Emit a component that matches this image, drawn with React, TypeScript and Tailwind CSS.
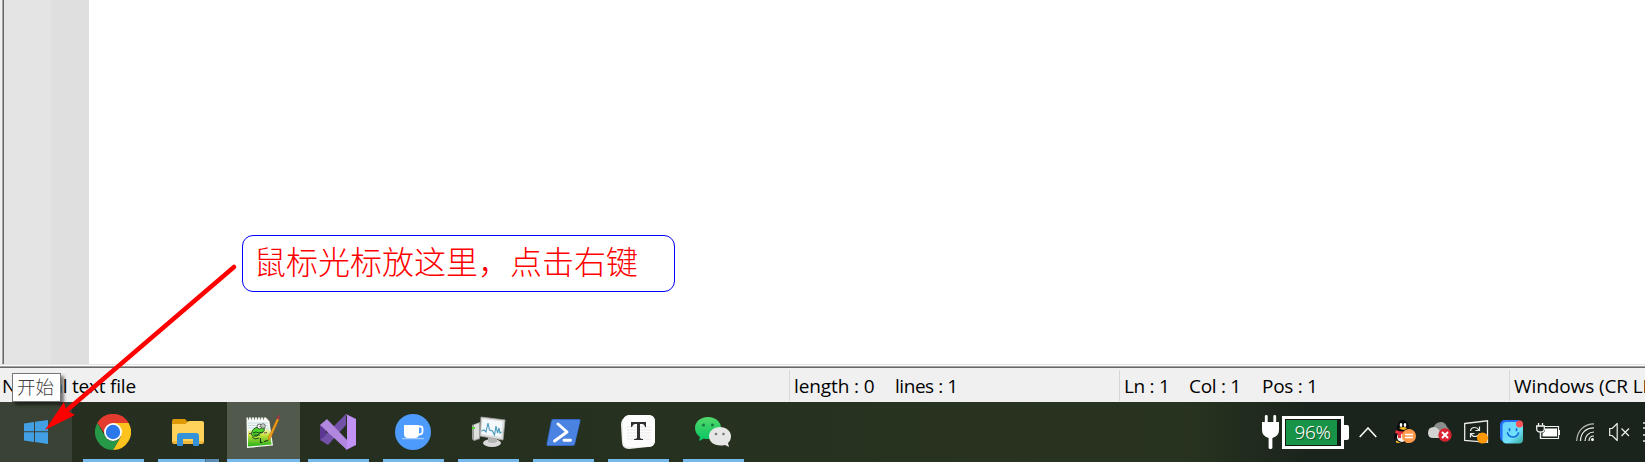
import type { ReactNode } from "react";

function StartIcon() {
  return (
    <svg width="24" height="24" viewBox="0 0 24 24" fill="#439fe4">
      <path d="M0 3.4 10 2v9.3H0zM11 1.8 24 0v11.3H11zM0 12.3h10v9.6L0 20.6zM11 12.3h13V24l-13-1.9z" />
    </svg>
  );
}

function ChromeIcon() {
  return (
    <svg width="36" height="36" viewBox="0 0 36 36">
      <path d="M18 18 2.4 9A18 18 0 0 1 33.6 9z" fill="#e33b2e" />
      <path d="M18 9h15.6A18 18 0 0 1 18 36l7.8-13.5z" fill="#fcc31e" />
      <path d="M2.4 9 10.2 22.5A9 9 0 0 0 25.8 22.5L18 36A18 18 0 0 1 2.4 9z" fill="#279847" />
      <path d="M2.4 9A18 18 0 0 1 33.6 9H18a9 9 0 0 0-8.5 10.5z" fill="#e33b2e" />
      <circle cx="18" cy="18" r="9" fill="#fff" />
      <circle cx="18" cy="18" r="7.2" fill="#2b78ea" />
    </svg>
  );
}

function ExplorerIcon() {
  return (
    <svg className="mt-[1px]" width="32" height="28" viewBox="0 0 32 28">
      <path d="M0 2q0-2 2-2h11l3 3h14q2 0 2 2v5H0z" fill="#dd9a04" />
      <path d="M0 6q0-1 1-1h12q1 0 2-1.500t2-1.500h13q2 0 2 2v18q0 2-2 2H2q-2 0-2-2z" fill="#ffd35a" />
      <path d="M0 22h32v1q0 2-2 2H2q-2 0-2-2z" fill="#efb83c" />
      <path d="M8 14h16q3 0 3 3v9q0 1-1 1h-4q-1 0-1-1v-6H11v6q0 1-1 1H6q-1 0-1-1v-9q0-3 3-3z" fill="#3592d8" />
    </svg>
  );
}

function NotepadIcon() {
  return (
    <svg width="34" height="34" viewBox="0 0 34 34">
      <defs>
        <linearGradient id="meadow" x1="0" y1="0" x2="0" y2="1">
          <stop stopColor="#f1f5c0" /><stop offset=".35" stopColor="#c5e23c" /><stop offset="1" stopColor="#23b01a" />
        </linearGradient>
      </defs>
      <path d="M.5 2.500H20l3.500 4 3.500 24-26 2.500z" fill="#f6f8f3" />
      <path d="M2 8h20M2 10.500h20M2 13h21" stroke="#b7d3e0" strokeWidth=".8" />
      <path d="M2 15.500 23.500 14l2 15.500L2 31.500z" fill="url(#meadow)" />
      <path d="M2.500 2v2.500M5.500 2v2.500M8.500 2v2.500M11.500 2v2.500M14.500 2v2.500M17.500 2v2.500" stroke="#5b625a" strokeWidth=".9" />
      <path d="M6 17c1-5 8-6 12-4 1 3-1 5-4 5l-3 3c-4 1-7-1-5-4z" fill="#4fd32e" stroke="#164d14" strokeWidth=".9" />
      <circle cx="13.500" cy="11.500" r="2.400" fill="#f8fbf6" stroke="#222" strokeWidth=".7" />
      <circle cx="17" cy="11" r="2.200" fill="#f8fbf6" stroke="#222" strokeWidth=".7" />
      <path d="M14 11v1.300M17 10.500v1.300M7 18l3-1 3 1 4-1M6 22l3 2 4-1M8 20h6" fill="none" stroke="#1b3c1b" strokeWidth=".9" />
      <path d="M3 18.500h3M18 18l3-.5" stroke="#7d3653" strokeWidth=".9" />
      <path d="m31 3.500 2 1-8.500 19-2.500 2 .3-3z" fill="#f2a318" stroke="#a65d12" strokeWidth=".5" />
      <path d="m30.700 3.500 1.300-3q2-.7 2 1L32.700 4.500z" fill="#a63745" />
      <path d="M14.500 23v4.500h2M18 26.500l4-1" fill="none" stroke="#1b351b" strokeWidth="1.100" />
    </svg>
  );
}

function VisualStudioIcon() {
  return (
    <svg width="36" height="36" viewBox="0 0 36 36">
      <path d="M0 11 6 16v5l-6 5z" fill="#52308a" />
      <path d="M0 26 26 0v11L8 31z" fill="#7351a9" />
      <path d="M0 11v15l6-5v-5z" fill="#5c3690" />
      <path d="m0 11 7-6 20 21v10z" fill="#b187df" />
      <path d="m26 0 10 5v26l-10 5q1-1 1-3V3q0-2-1-3z" fill="#c292f7" />
    </svg>
  );
}

function CoffeeIcon() {
  return (
    <svg width="36" height="36" viewBox="0 0 36 36">
      <circle cx="18" cy="18" r="18" fill="#4c9bfd" />
      <path d="M9 11h15v9q0 4-4 4h-7q-4 0-4-4z" fill="#fff" />
      <path d="M23 12.500h2.500q2 0 2 2v3q0 3-4 3" fill="none" stroke="#fff" strokeWidth="1.800" />
      <path d="M7 24.700h22" stroke="#b9d8ff" strokeWidth="1" />
    </svg>
  );
}

function MonitorIcon() {
  return (
    <svg width="35" height="32" viewBox="0 0 35 32">
      <path d="m1 9 8-3v17l-6 2-2-2z" fill="#9b9d9c" />
      <path d="m3 9 5-2v15l-5 2z" fill="#dedfdd" />
      <path d="M1 11h3v2H1z" fill="#52d62d" />
      <ellipse cx="21" cy="27" rx="9" ry="4" fill="#d9dad9" />
      <path d="M17 20h9v6q-4 2-9 0z" fill="#b4b6b5" />
      <path d="m10 1 24 3-2 20-23-4z" fill="#dcdddc" stroke="#a4a5a4" strokeWidth=".8" />
      <path d="m11.500 3 20 2.500-1.500 15.500L10.500 18z" fill="#f3f8fa" />
      <path d="m10.500 15 2.500-1 2 2 2-9 1.500 7 3 1 2 4 1.500-9 1.500 7 1.500-5 1 5 1.500-1" fill="none" stroke="#4999bd" strokeWidth="1.100" />
    </svg>
  );
}

function PowerShellIcon() {
  return (
    <svg width="35" height="27" viewBox="0 0 35 27">
      <path d="M7 0h26q2 0 1.500 2L29 25q-.5 2-2 2H2q-2 0-1.500-2L5 2q.5-2 2-2z" fill="#3568c5" />
      <path d="M7 1h26q1 0 .800 1l-5.300 23q-.4 1-1.500 1H2q-1 0-.7-1L6 2q.3-1 1-1z" fill="#4b83e3" />
      <path d="m12 5 9 8L8.500 22M18 21.300h6.500" fill="none" stroke="#fff" strokeWidth="2.900" strokeLinecap="round" strokeLinejoin="round" />
    </svg>
  );
}

function TyporaIcon() {
  return (
    <svg width="34" height="34" viewBox="0 0 34 34">
      <path d="M3 3 8 0h19q7 0 7 7v18q0 7-7 7l-19 2q-7 0-7-7L0 10q0-5 3-7z" fill="#eeeeed" />
      <rect x="2" y="0" width="32" height="32" rx="6" fill="#fdfdfd" />
      <path d="M6 12h24M6 15h24M6 18h24M6 21h24M6 24h24" stroke="#dedede" strokeWidth=".7" />
      <path d="M10 7h15v5h-1q-.5-3-3-3h-2v13q0 2 3 2v1h-9v-1q3 0 3-2V9h-2q-2 0-3 3h-1z" fill="#303033" />
    </svg>
  );
}

function WeChatIcon() {
  return (
    <svg width="36" height="30" viewBox="0 0 36 30">
      <defs>
        <linearGradient id="chat" x1="0" y1="0" x2="0" y2="1">
          <stop stopColor="#53d769" /><stop offset="1" stopColor="#04c663" />
        </linearGradient>
      </defs>
      <path d="M13 0c8 0 13 5 13 11s-5 11-13 11c-2 0-3 0-4-.5L4 24l1-4C2 18 0 15 0 11 0 5 5 0 13 0z" fill="url(#chat)" />
      <circle cx="8.500" cy="8" r="1.500" fill="#167a42" /><circle cx="17.500" cy="8" r="1.500" fill="#167a42" />
      <path d="M25 10c6 0 11 4 11 9 0 3-1 5-3 7l1 4-4-2c-9 2-16-2-16-9 0-5 5-9 11-9z" fill="#e5e6e5" />
      <circle cx="21" cy="17" r="1.300" fill="#777a78" /><circle cx="28.500" cy="17" r="1.300" fill="#777a78" />
    </svg>
  );
}

function TaskItem({ children, active, stacked }: { children: ReactNode; active?: boolean; stacked?: boolean }) {
  return (
    <div className={active ? "flex h-full w-[73px] flex-col bg-[#50594b]" : "flex h-full w-[73px] flex-col px-[6px]"}>
      <div className="flex h-[57px] items-center justify-center pt-[3px] pr-px">{children}</div>
      <div className="flex h-[3px] bg-[#76b9ed]">
        {stacked && <span className="ml-auto w-[14px] border-l border-[#45708e] bg-[#5b8db3]" />}
      </div>
    </div>
  );
}

function PlugIcon() {
  return (
    <svg className="ml-[2px]" width="17" height="34" viewBox="0 0 18 34" preserveAspectRatio="none" fill="#fff">
      <path d="M3 1q0-1 1.500-1T6 1v6h6V1q0-1 1.500-1T15 1v6h3v8q0 6-7 8v10q0 1-2 1t-2-1V23q-7-2-7-8V7h3z" />
    </svg>
  );
}

function QQIcon() {
  return (
    <svg width="23" height="24" viewBox="0 0 23 24">
      <path d="M3 21q-1 2 3 2h10v-3H5z" fill="#f3b420" />
      <path d="M4 9C4-3 16-3 16 9l3 7v4l-2-2q-1 5-7 5t-7-5l-2 2v-4z" fill="#080b0c" />
      <ellipse cx="9" cy="17" rx="5" ry="5" fill="#f3f3ef" />
      <ellipse cx="8" cy="5" rx="1.300" ry="2" fill="#fff" /><ellipse cx="12" cy="5" rx="1.300" ry="2" fill="#fff" />
      <path d="M6 8q4-2 8 0-3 4-8 0z" fill="#f5b51e" />
      <path d="M3 10q7 3 13 0v3q-4 2-8 1v4H5v-4l-3-1z" fill="#e5313c" />
      <circle cx="16" cy="16" r="7" fill="#ff9a4b" />
      <path d="M12 14.500h8M12 17.500h8" stroke="#fff" strokeWidth="1.300" />
    </svg>
  );
}

function CloudIcon() {
  return (
    <svg width="24" height="20" viewBox="0 0 24 20">
      <path d="M5 7q2-7 8-7 4 0 6 5 2 1 2 4v3H8z" fill="#8c8e8c" />
      <path d="M0 11q0-6 6-6 3 0 5 3l6 3-4 5H5q-5 0-5-5z" fill="#d2d3d1" />
      <circle cx="17" cy="13" r="6.700" fill="#d92332" />
      <path d="m14 10 6 6m0-6-6 6" stroke="#fff" strokeWidth="2" />
    </svg>
  );
}

function SyncIcon() {
  return (
    <svg width="25" height="24" viewBox="0 0 25 24">
      <path d="M.7 3.500 23.500.8v21.500L.7 20.500z" fill="none" stroke="#e8ebe8" strokeWidth="1.300" />
      <path d="M6.500 11q.5-3.500 4-3.500 3 0 4.500 2.500m.5-3.500v4h-4M15.500 13.500q-1 3-4.500 3-3 0-4-3m-.5 4v-4h4" fill="none" stroke="#e8ebe8" strokeWidth="1.200" />
      <circle cx="18.500" cy="18" r="5.500" fill="#ff9908" />
    </svg>
  );
}

function SmileIcon() {
  return (
    <svg width="24" height="24" viewBox="0 0 24 24">
      <defs>
        <linearGradient id="face" x1="0" y1="0" x2="1" y2="1">
          <stop stopColor="#67d0ff" /><stop offset=".6" stopColor="#70e2fb" /><stop offset="1" stopColor="#34a99d" />
        </linearGradient>
      </defs>
      <rect width="22" height="22" rx="5" fill="#216ef0" />
      <rect x="2.500" y="2" width="20.500" height="21.500" rx="4" fill="url(#face)" />
      <path d="M9.500 8.800v1.700m7-1.700v1.700M7.500 13q1.500 4 5.500 4t5.500-4" fill="none" stroke="#176ddd" strokeWidth="1.700" strokeLinecap="round" />
      <circle cx="19.500" cy="4" r="3.500" fill="#ff5054" />
    </svg>
  );
}

function BatteryIcon() {
  return (
    <svg className="-mt-px" width="24" height="17" viewBox="0 0 24 17" fill="none" stroke="#f1f3f1">
      <path d="M8 3.500h14.500v12H4.500V10M23.500 7v5" strokeWidth="1.200" />
      <path d="M9 5.500h12v8H6.500v-3L9 8z" fill="#fff" stroke="none" />
      <path d="M2.500 0v3m4-3v3M.7 3h7.600v3q0 3-3.800 3T.7 6zm3.800 6v6" strokeWidth="1.300" />
    </svg>
  );
}

function WifiIcon() {
  return (
    <svg width="19" height="19" viewBox="0 0 19 19" fill="none" stroke="#eef1ee" strokeWidth="1.200">
      <path d="M.7 18C1 8 8 .8 18 .8" stroke="#b4bab4" />
      <path d="M4.500 18C4.500 10 10 4.800 18 4.800M9 18c0-5 4-9 9-9M13 18c0-3 2-5 5-5" />
      <circle cx="16.500" cy="16.500" r="1.500" fill="#fff" stroke="none" />
    </svg>
  );
}

function SpeakerIcon() {
  return (
    <svg width="21" height="18" viewBox="0 0 21 18" fill="none" stroke="#eef1ee" strokeWidth="1.200">
      <path d="M.7 5.500h2.500l5-5v17l-5-5H.7zM12.500 5.500l7.500 7.500m0-7.500L12.500 13" />
    </svg>
  );
}

export default function App() {
  return (
    <main className="relative flex h-[462px] w-[1645px] flex-col overflow-hidden bg-white font-['Open_Sans','Noto_Sans_CJK_SC',sans-serif]">
      <section className="flex h-[364px]">
        <div className="w-[2px] bg-[#f0f0f0]" />
        <div className="w-[2px] border-l border-[#a0a0a0] bg-[#696969]" />
        <div className="w-[47px] bg-[#e4e4e4]" />
        <div className="w-[38px] bg-[#dfdfdf]" />
        <div className="flex-1 bg-white pt-[235px] pl-[153px]">
          <div className="h-[57px] w-[433px] rounded-[11px] border border-[#0000ff] pl-[11px] font-['Noto_Sans_CJK_SC',sans-serif] text-[32px] leading-[48px] font-light whitespace-nowrap text-[#ff0000]">
            鼠标光标放这里，点击右键
          </div>
        </div>
      </section>
      <div className="h-[4px] border-t border-[#e3e3e3] bg-white pt-px">
        <div className="h-[2px] border-t border-[#a0a0a0] bg-[#696969]" />
      </div>

      <footer className="flex h-[34px] bg-[#f0f0f0] pt-[2px] text-[19px] leading-[32px] whitespace-pre text-black">
        <div className="h-[31px] w-[790px] border-r border-[#d7d7d7] pl-[2px] tracking-[-0.2px]">Normal text file</div>
        <div className="flex h-[31px] w-[330px] gap-[22px] border-r border-[#d7d7d7] pl-[4px]">
          <span className="w-[79px] tracking-[-0.1px]">length : 0</span><span className="tracking-[-0.45px]">lines : 1</span>
        </div>
        <div className="flex h-[31px] w-[390px] border-r border-[#d7d7d7] pl-[4px] tracking-[-0.3px]">
          <span className="w-[65px]">Ln : 1</span><span className="w-[73px]">Col : 1</span><span>Pos : 1</span>
        </div>
        <div className="h-[31px] w-[135px] overflow-hidden pl-[4px] tracking-[-0.1px]">Windows (CR LF)</div>
      </footer>

      <nav className="flex h-[60px] bg-linear-to-r from-[#252e20] via-[#28331f] via-72% to-[#1a231c] to-80%">
        <div className="mr-[5px] flex h-full w-[72px] items-center justify-center bg-[#3a4235]"><StartIcon /></div>
        <div className="flex gap-[2px]">
          <TaskItem><ChromeIcon /></TaskItem>
          <TaskItem stacked><ExplorerIcon /></TaskItem>
          <TaskItem active><NotepadIcon /></TaskItem>
          <TaskItem><VisualStudioIcon /></TaskItem>
          <TaskItem><CoffeeIcon /></TaskItem>
          <TaskItem><MonitorIcon /></TaskItem>
          <TaskItem><PowerShellIcon /></TaskItem>
          <TaskItem><TyporaIcon /></TaskItem>
          <TaskItem><WeChatIcon /></TaskItem>
        </div>
        <div className="ml-auto flex w-[385px] shrink-0 items-center">
          <PlugIcon />
          <div className="ml-[3px] flex h-[33px] w-[62px] border-[3px] border-white bg-[#111914] p-px">
            <div className="flex w-[51px] items-center justify-center bg-[#179447] pl-[2px] font-['Noto_Sans',sans-serif] text-[19px] font-light tracking-[-0.4px] text-white [text-shadow:1px_1px_1px_#174c2b]">96%</div>
          </div>
          <div className="h-[15px] w-[5px] rounded-r-[2px] bg-white" />
          <svg className="ml-[10px]" width="18" height="11" viewBox="0 0 18 11" fill="none" stroke="#fff" strokeWidth="1.500"><path d="m.7 10 8.300-9 8.300 9" /></svg>
          <div className="ml-[16px]"><QQIcon /></div>
          <div className="ml-[12px]"><CloudIcon /></div>
          <div className="ml-[12px]"><SyncIcon /></div>
          <div className="ml-[11px]"><SmileIcon /></div>
          <div className="ml-[12px]"><BatteryIcon /></div>
          <div className="ml-[16px]"><WifiIcon /></div>
          <div className="ml-[14px]"><SpeakerIcon /></div>
          <svg className="ml-auto" width="2" height="20" viewBox="0 0 2 20"><path d="M0 1h2M0 6h2M0 13h2M0 19h2" stroke="#e4e8e4" strokeWidth="1.500" /></svg>
        </div>
      </nav>

      <div className="absolute top-[373px] left-[12px] flex h-[29px] w-[49px] items-center justify-center border border-[#767676] bg-white pr-[2px] pb-[2px] font-['Noto_Sans_CJK_SC',sans-serif] text-[18.5px] leading-none font-light text-[#404040] shadow-[3px_3px_3px_#00000080]">开始</div>
      <svg className="pointer-events-none absolute top-[258px] left-[40px]" width="202" height="178" viewBox="40 258 202 178">
        <path d="M234 267 66 411" stroke="#f00" strokeWidth="4.500" strokeLinecap="round" />
        <path d="m45 430 19-28 2 8 9 5z" fill="#f00" />
      </svg>
    </main>
  );
}
